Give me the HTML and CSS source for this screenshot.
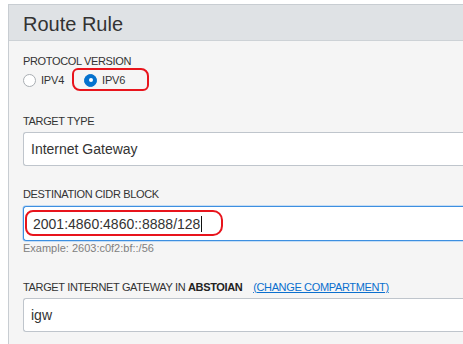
FILE: index.html
```html
<!DOCTYPE html>
<html>
<head>
<meta charset="utf-8">
<link rel="stylesheet" href="styles.css">
</head>
<body>
<div class="panel">
  <div class="header"><h1 class="title">Route Rule</h1></div>
  <div class="form">
    <div class="field field-protocol">
      <div class="label">PROTOCOL VERSION</div>
      <div class="radios">
        <span class="radio"><span class="dot"></span><span class="rlabel">IPV4</span></span>
        <span class="radio checked"><span class="dot"></span><span class="rlabel">IPV6</span></span>
      </div>
      <span class="mark mark-radio"></span>
    </div>
    <div class="field field-type">
      <div class="label">TARGET TYPE</div>
      <div class="input">Internet Gateway</div>
    </div>
    <div class="field field-cidr">
      <div class="label">DESTINATION CIDR BLOCK</div>
      <div class="input focused"><span class="cidr">2001:4860:4860::8888/128</span><span class="caret"></span></div>
      <div class="help">Example: 2603:c0f2:bf::/56</div>
      <span class="mark mark-cidr"></span>
    </div>
    <div class="field field-igw">
      <div class="label">TARGET INTERNET GATEWAY IN <b>ABSTOIAN</b> <a class="link">(CHANGE COMPARTMENT)</a></div>
      <div class="input">igw</div>
    </div>
  </div>
</div>
</body>
</html>
```
FILE: styles.css
```css
html, body {
  margin: 0;
  padding: 0;
  background: #ffffff;
  overflow: hidden;
}
body {
  font-family: "Liberation Sans", Arial, sans-serif;
  color: #333;
  width: 463px;
  height: 344px;
}
.panel {
  position: relative;
  margin: 4px 0 0 8px;
  width: 454px;
  height: 339px;
  border-left: 1px solid #c8cdd2;
  border-top: 1px solid #c8cdd2;
  background: #f5f5f5;
}
.header {
  height: 35px;
  background: #dfe2e5;
  border-bottom: 1px solid #cdd2d6;
  display: flex;
  align-items: center;
  padding-left: 14px;
}
.title {
  margin: 0;
  font-weight: normal;
  font-size: 20px;
  color: #333;
  line-height: 24px;
  position: relative;
  top: 1px;
}
.form {
  padding: 14px 0 0 14px;
}
.field {
  position: relative;
}
.label {
  font-size: 11px;
  line-height: 13px;
  letter-spacing: -0.35px;
  color: #333;
  white-space: nowrap;
}
.label b {
  font-weight: bold;
  color: #222;
  margin-right: 8px;
}
.link {
  color: #0a6fce;
  text-decoration: underline;
}
.radios {
  display: flex;
  align-items: center;
  margin-top: 5px;
  height: 14px;
}
.radio {
  display: flex;
  align-items: center;
  margin-right: 20px;
}
.dot {
  box-sizing: border-box;
  width: 13px;
  height: 13px;
  border-radius: 50%;
  border: 1px solid #a9aeb3;
  background: #fff;
  margin-right: 5px;
  position: relative;
}
.checked .dot {
  border-color: #0572ce;
  background: #0572ce;
}
.checked .dot::after {
  content: "";
  position: absolute;
  left: 3.5px;
  top: 3.5px;
  width: 4px;
  height: 4px;
  border-radius: 50%;
  background: #fff;
}
.rlabel {
  font-size: 11px;
  letter-spacing: -0.2px;
  color: #333;
}
.field-protocol { margin-bottom: 28px; }
.field-type { margin-bottom: 22px; }
.field-cidr { margin-bottom: 26px; }
.input {
  box-sizing: border-box;
  width: 440px;
  background: #fff;
  border: 1px solid #bfc5cc;
  border-right: none;
  border-radius: 3px 0 0 3px;
  font-size: 14px;
  color: #333;
  padding-left: 7px;
  display: flex;
  align-items: center;
  margin-top: 4px;
  height: 34px;
}
.input.focused {
  border-color: #3d8fe0;
  box-shadow: -1px 0 0 0 #c5ddf5, 0 -1px 0 0 #c5ddf5, 0 1px 0 0 #c5ddf5;
  height: 35px;
  margin-top: 5px;
  padding-left: 9px;
}
.cidr {
  letter-spacing: 0;
}
.caret {
  display: inline-block;
  width: 1px;
  height: 16px;
  background: #111;
  margin-left: 1px;
}
.help {
  font-size: 11px;
  line-height: 13px;
  color: #808080;
  margin-top: 1px;
}
.mark {
  position: absolute;
  border: 2px solid #e8141c;
  box-sizing: border-box;
}
.mark-radio {
  left: 49px;
  top: 13px;
  width: 77px;
  height: 23px;
  border-radius: 6px 8px 6px 8px;
}
.mark-cidr {
  left: 2px;
  top: 22px;
  width: 198px;
  height: 26px;
  border-radius: 8px 10px 10px 8px;
}
```
